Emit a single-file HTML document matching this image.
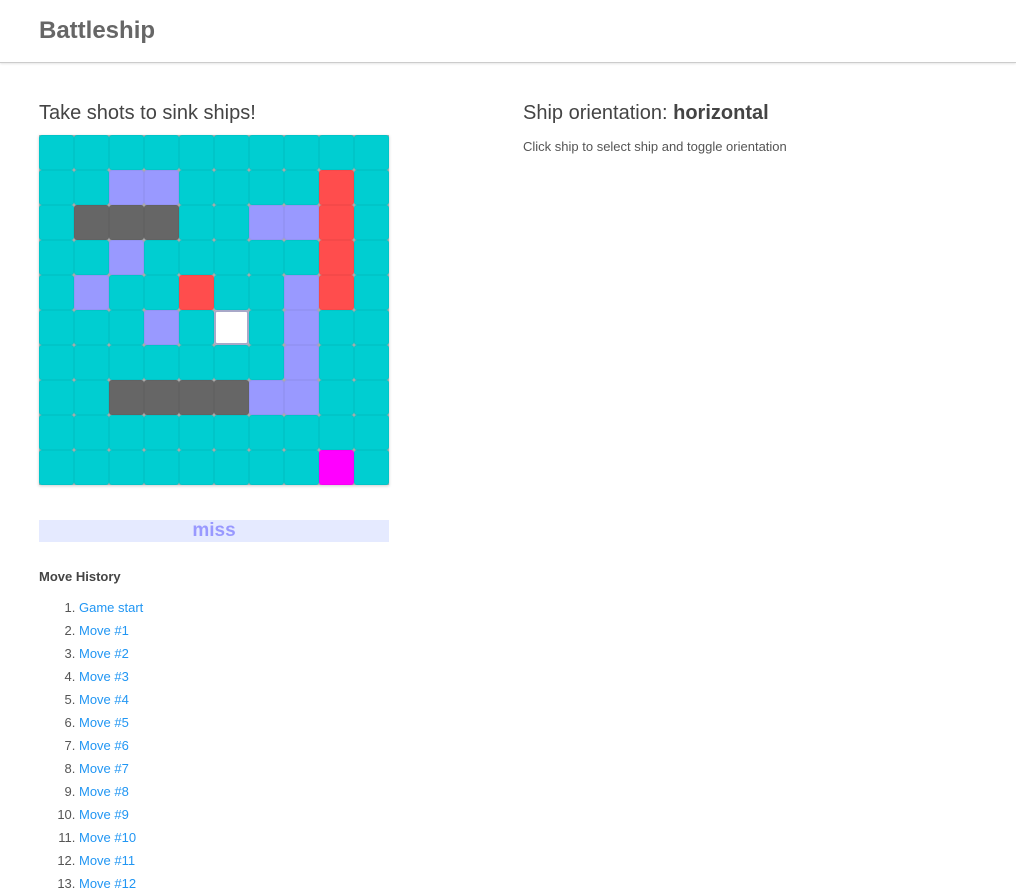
<!DOCTYPE html><html><head><style>
body{margin:0;font-family:"Liberation Sans",sans-serif;color:#444;background:#fff;width:1016px;height:885px;overflow:hidden}
.hdr{height:62px;border-bottom:1px solid #ccc;box-shadow:0 1px 2px rgba(0,0,0,.1)}
.hdr h1{margin:0;position:absolute;left:39px;top:17px;font-size:24px;color:#666;font-weight:bold}
.h2{position:absolute;font-size:20px;color:#444}
.grid{position:absolute;left:39px;top:135px;width:350px;height:350px;display:grid;grid-template-columns:repeat(10,35px);grid-template-rows:repeat(10,35px);background:#aaa;box-shadow:0 1px 3px rgba(0,0,0,.2)}
.grid div{background:#00ced1;border-radius:3px;box-shadow:inset 0 0 0 1px rgba(0,0,0,.04)}
.p{background:#9999ff!important}.g{background:#666!important}.r{background:#ff4d4d!important}.m{background:#ff00ff!important}.w{background:#fff!important;box-shadow:inset 0 0 0 2px #a8a8c8!important}
.miss{position:absolute;left:39px;top:520px;width:350px;height:22px;background:#e5eaff;color:#9999ff;font-weight:bold;font-size:19px;text-align:center;line-height:22px}
ol{position:absolute;left:39px;top:596px;margin:0;padding-left:40px;font-size:13px;color:#555}
li{height:23px;line-height:23px}
li span{color:#2196f3}
</style></head><body>
<div class="hdr"><h1>Battleship</h1></div>
<div class="h2" style="left:39px;top:102px">Take shots to sink ships!</div>
<div class="h2" style="left:523px;top:102px">Ship orientation: <b>horizontal</b></div>
<div style="position:absolute;left:523px;top:139px;font-size:13px;color:#555">Click ship to select ship and toggle orientation</div>
<div class="grid">
<div></div><div></div><div></div><div></div><div></div><div></div><div></div><div></div><div></div><div></div>
<div></div><div></div><div class="p"></div><div class="p"></div><div></div><div></div><div></div><div></div><div class="r"></div><div></div>
<div></div><div class="g"></div><div class="g"></div><div class="g"></div><div></div><div></div><div class="p"></div><div class="p"></div><div class="r"></div><div></div>
<div></div><div></div><div class="p"></div><div></div><div></div><div></div><div></div><div></div><div class="r"></div><div></div>
<div></div><div class="p"></div><div></div><div></div><div class="r"></div><div></div><div></div><div class="p"></div><div class="r"></div><div></div>
<div></div><div></div><div></div><div class="p"></div><div></div><div class="w"></div><div></div><div class="p"></div><div></div><div></div>
<div></div><div></div><div></div><div></div><div></div><div></div><div></div><div class="p"></div><div></div><div></div>
<div></div><div></div><div class="g"></div><div class="g"></div><div class="g"></div><div class="g"></div><div class="p"></div><div class="p"></div><div></div><div></div>
<div></div><div></div><div></div><div></div><div></div><div></div><div></div><div></div><div></div><div></div>
<div></div><div></div><div></div><div></div><div></div><div></div><div></div><div></div><div class="m"></div><div></div>
</div>
<div class="miss">miss</div>
<div style="position:absolute;left:39px;top:569px;font-size:13px;font-weight:bold;color:#444">Move History</div>
<ol>
<li><span>Game start</span></li><li><span>Move #1</span></li><li><span>Move #2</span></li><li><span>Move #3</span></li><li><span>Move #4</span></li><li><span>Move #5</span></li><li><span>Move #6</span></li><li><span>Move #7</span></li><li><span>Move #8</span></li><li><span>Move #9</span></li><li><span>Move #10</span></li><li><span>Move #11</span></li><li><span>Move #12</span></li>
</ol>
</body></html>
